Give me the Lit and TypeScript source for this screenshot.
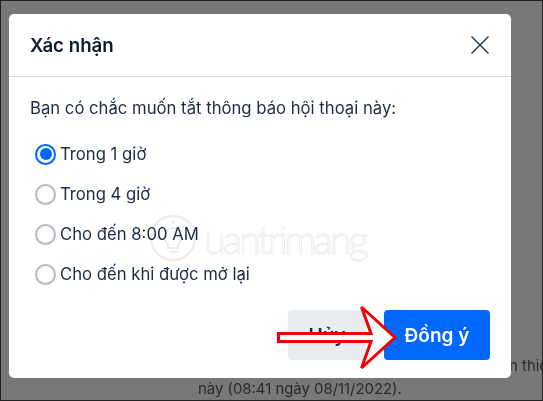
import { LitElement, html, css } from "lit";
import { customElement } from "lit/decorators.js";

@customElement("app-root")
export class AppRoot extends LitElement {
  static styles = css`
    :host { display: block; width: 543px; height: 401px; font-family: Inter, "Noto Sans", sans-serif; }
    .screen { position: relative; width: 543px; height: 401px; box-sizing: border-box; overflow: hidden;
      background: #787878; border: 1px solid #222; padding: 13px 31px 0 8px; }
    .behind { position: absolute; left: 0; right: 0; top: 354px; color: #2a2a2a; font-size: 14.9px; line-height: 23px; white-space: nowrap; }
    .behind .cut { display: flex; justify-content: flex-end; }
    .behind .cut span { margin-right: -6px; }
    .behind .last { padding-left: 197px; }
    .modal { position: relative; box-sizing: border-box; width: 502px; height: 364px; background: #fff; border-radius: 5px; display: flex; flex-direction: column; color: #1b2b47; }
    .head { height: 63px; box-sizing: border-box; border-bottom: 1px solid #d6dbe1; display: flex; align-items: center; justify-content: space-between; padding: 0 22px 0 21px; }
    .title { font-size: 18.7px; font-weight: 600; color: #081c36; }
    .close { width: 18px; height: 18px; display: block; }
    .body { flex: 1; padding: 19px 21px 0; display: flex; flex-direction: column; }
    .q { font-size: 16.7px; line-height: 24px; margin: 0 0 22px; }
    .opts { display: flex; flex-direction: column; gap: 16px; padding-left: 5px; }
    .opt { display: flex; align-items: center; gap: 4px; font-size: 16.7px; line-height: 24px; height: 24px; }
    .radio { width: 21px; height: 21px; box-sizing: border-box; border-radius: 50%; border: 2px solid #b3b9c1; background: #fff; flex: none; }
    .radio.on { border-color: #0068ff; display: grid; place-items: center; }
    .radio.on::after { content: ""; width: 12px; height: 12px; background: #0068ff; border-radius: 50%; }
    .foot { display: flex; justify-content: flex-end; gap: 18px; padding: 0 21px 18px; }
    .btn { height: 50px; border-radius: 4px; border: 0; font: 600 19px Inter, sans-serif; display: flex; align-items: center; justify-content: center; }
    .cancel { width: 78px; background: #e9ecf0; color: #1b2b47; }
    .ok { width: 106px; background: #0068ff; color: #fff; }
    .arrow { position: absolute; left: -1px; top: -1px; width: 543px; height: 401px; pointer-events: none; }
    .mark { position: absolute; left: 140px; top: 197px; width: 224px; height: 58px; mix-blend-mode: multiply; }
    .mark text { font: 300 40px Lato, sans-serif; fill: none; stroke: #eeeeee; stroke-width: 1; }
  `;

  render() {
    const opts = ["Trong 1 giờ", "Trong 4 giờ", "Cho đến 8:00 AM", "Cho đến khi được mở lại"];
    return html`<div class="screen">
      <div class="behind">
        <div class="cut"><span>n thiế</span></div>
        <div class="last">này (08:41 ngày 08/11/2022).</div>
      </div>
      <div class="modal">
        <div class="head">
          <div class="title">Xác nhận</div>
          <svg class="close" viewBox="0 0 18 18" fill="none" stroke="#1b2b47" stroke-width="1.3"><path d="M0.5 0.5 L17.5 17.5 M17.5 0.5 L0.5 17.5"/></svg>
        </div>
        <div class="body">
          <p class="q">Bạn có chắc muốn tắt thông báo hội thoại này:</p>
          <svg class="mark" viewBox="0 0 224 58">
            <circle cx="24" cy="27" r="22" fill="none" stroke="#eeeeee" stroke-width="2.5"/>
            <path d="M24 17a9 9 0 0 0-5 16v4h10v-4a9 9 0 0 0-5-16z M20 41h8" fill="none" stroke="#e8e8e8" stroke-width="1.5"/>
            <path d="M24 9v4 M12 14l3 3 M36 14l-3 3 M8 27h4 M40 27h-4" stroke="#e8e8e8" stroke-width="1.5"/>
            <text x="55" y="43" textLength="165">uantrimang</text>
          </svg>
          <div class="opts">
            ${opts.map((o, i) => html`<div class="opt"><span class="radio ${i === 0 ? "on" : ""}"></span><span>${o}</span></div>`)}
          </div>
        </div>
        <div class="foot">
          <div class="btn cancel">Hủy</div>
          <div class="btn ok">Đồng ý</div>
        </div>
      </div>
      <svg class="arrow" viewBox="0 0 543 401">
        <polygon points="278.5,333.5 371,333.5 361.5,307 395,337.5 361.5,368 371,341.5 278.5,341.5" fill="#fff" stroke="#f00000" stroke-width="3"/>
      </svg>
    </div>`;
  }
}
